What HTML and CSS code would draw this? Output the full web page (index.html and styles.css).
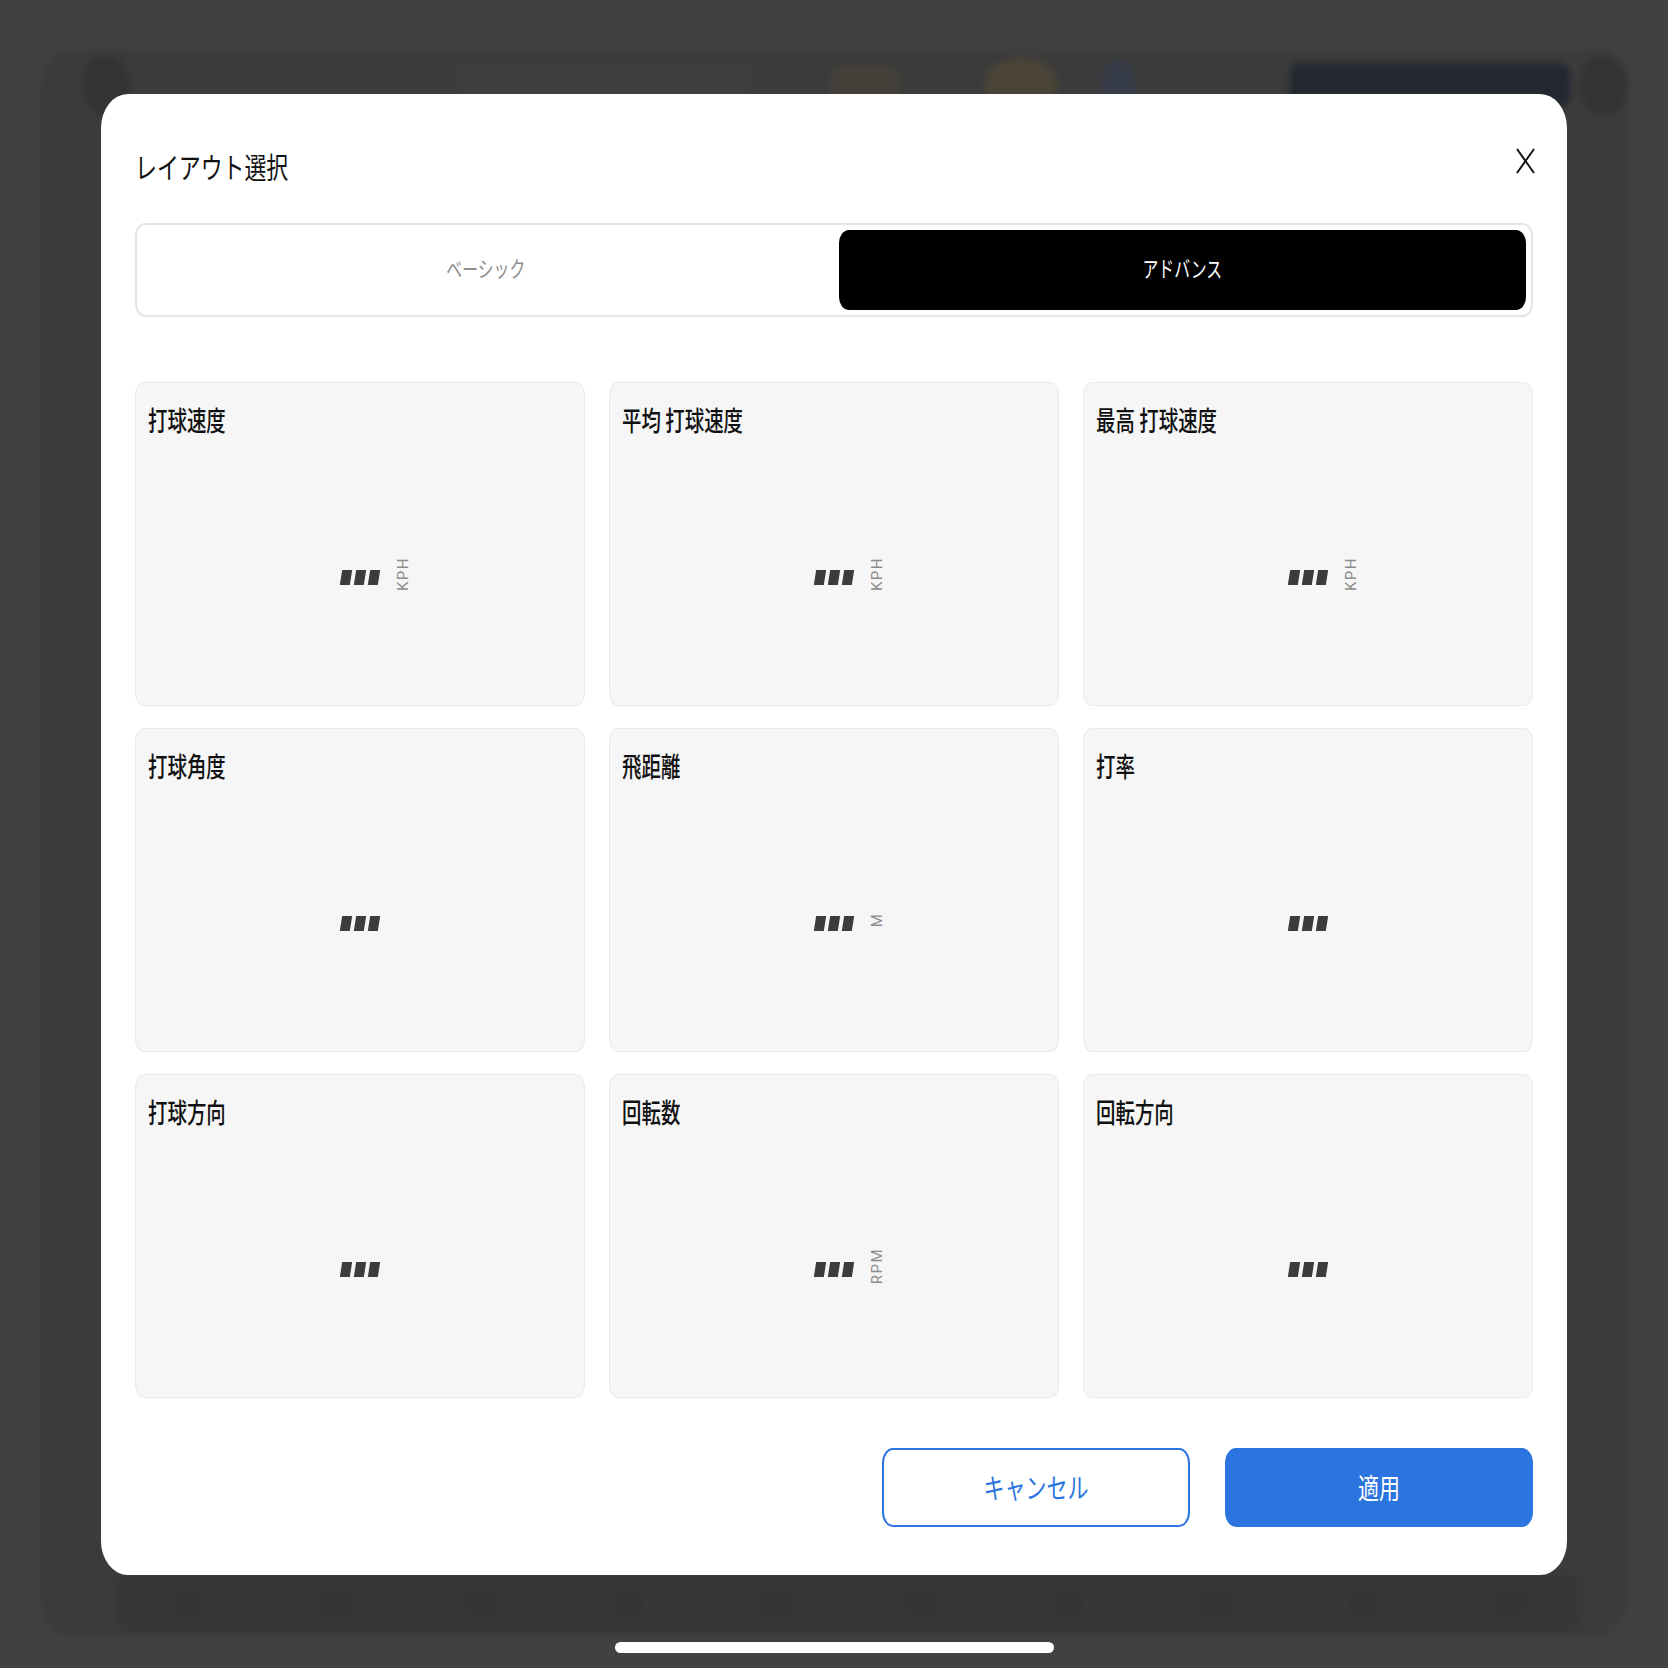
FILE: index.html
```html
<!DOCTYPE html>
<html lang="ja">
<head>
    <meta charset="UTF-8">
    <meta name="viewport" content="width=device-width, initial-scale=1.0">
    <title>レイアウト選択</title>
    <link rel="stylesheet" href="styles.css">
</head>
<body>
    <div class="app">
        <header class="app-head">
            <span class="blob avatar"></span>
            <span class="blob search"></span>
            <span class="spacer"></span>
            <span class="blob gold"></span>
            <span class="blob ochre"></span>
            <span class="blob sky"></span>
            <span class="blob navy"></span>
            <span class="blob avatar"></span>
        </header>
        <main class="app-main"></main>
        <nav class="app-tabs">
            <span class="blob dot"></span>
            <span class="blob dot"></span>
            <span class="blob dot"></span>
            <span class="blob dot"></span>
            <span class="blob dot"></span>
            <span class="blob dot"></span>
            <span class="blob dot"></span>
            <span class="blob dot"></span>
            <span class="blob dot"></span>
            <span class="blob dot"></span>
        </nav>
    </div>
    <div class="home-bar"></div>

    <div class="overlay">
        <section class="modal">
            <div class="modal-head">
                <h2 class="modal-title"><span class="cond">レイアウト選択</span></h2>
                <button class="close" aria-label="閉じる">
                    <svg width="19" height="26" viewBox="0 0 19 26">
                        <path d="M1 1 L18 25 M18 1 L1 25" stroke="#111" stroke-width="2" fill="none"/>
                    </svg>
                </button>
            </div>

            <div class="seg">
                <button class="seg-btn"><span class="cond mid">ベーシック</span></button>
                <button class="seg-btn active"><span class="cond mid">アドバンス</span></button>
            </div>

            <div class="grid">
                <div class="card">
                    <div class="card-title"><span class="cond">打球速度</span></div>
                    <div class="card-body"><div class="value"><i></i><i></i><i></i><span class="unit">KPH</span></div></div>
                </div>
                <div class="card">
                    <div class="card-title"><span class="cond">平均 打球速度</span></div>
                    <div class="card-body"><div class="value"><i></i><i></i><i></i><span class="unit">KPH</span></div></div>
                </div>
                <div class="card">
                    <div class="card-title"><span class="cond">最高 打球速度</span></div>
                    <div class="card-body"><div class="value"><i></i><i></i><i></i><span class="unit">KPH</span></div></div>
                </div>
                <div class="card">
                    <div class="card-title"><span class="cond">打球角度</span></div>
                    <div class="card-body"><div class="value"><i></i><i></i><i></i></div></div>
                </div>
                <div class="card">
                    <div class="card-title"><span class="cond">飛距離</span></div>
                    <div class="card-body"><div class="value"><i></i><i></i><i></i><span class="unit">M</span></div></div>
                </div>
                <div class="card">
                    <div class="card-title"><span class="cond">打率</span></div>
                    <div class="card-body"><div class="value"><i></i><i></i><i></i></div></div>
                </div>
                <div class="card">
                    <div class="card-title"><span class="cond">打球方向</span></div>
                    <div class="card-body"><div class="value"><i></i><i></i><i></i></div></div>
                </div>
                <div class="card">
                    <div class="card-title"><span class="cond">回転数</span></div>
                    <div class="card-body"><div class="value"><i></i><i></i><i></i><span class="unit">RPM</span></div></div>
                </div>
                <div class="card">
                    <div class="card-title"><span class="cond">回転方向</span></div>
                    <div class="card-body"><div class="value"><i></i><i></i><i></i></div></div>
                </div>
            </div>

            <div class="actions">
                <button class="btn btn-cancel"><span class="cond mid">キャンセル</span></button>
                <button class="btn btn-apply"><span class="cond mid">適用</span></button>
            </div>
        </section>
    </div>
</body>
</html>
```

FILE: styles.css
```css
html {
    font-family: "Noto Sans CJK JP", "Noto Sans", sans-serif;
}
body {
    margin: 0;
    height: 1668px;
    box-sizing: border-box;
    padding: 50px 40px 15px;
    background: #414141;
    display: flex;
    flex-direction: column;
    overflow: hidden;
}
button {
    font-family: inherit;
    cursor: pointer;
}

/* dimmed app behind the dialog */
.app {
    flex: 1;
    display: flex;
    flex-direction: column;
    background: #3b3b3b;
    border-radius: 30px / 40px;
    filter: blur(3px);
}
.app-head {
    display: flex;
    align-items: center;
    gap: 24px;
    height: 70px;
    padding: 0 0 0 42px;
}
.spacer {
    flex: 1;
}
.blob {
    display: block;
    background: #363636;
}
.avatar {
    width: 48px;
    height: 60px;
    border-radius: 50%;
    background: #333;
}
.search {
    width: 300px;
    height: 40px;
    border-radius: 10px;
    background: #3e3e3e;
    margin-left: 300px;
}
.gold {
    width: 70px;
    height: 40px;
    border-radius: 12px;
    background: #43403a;
}
.ochre {
    width: 74px;
    height: 56px;
    border-radius: 50%;
    background: #4a4337;
    margin-left: 60px;
}
.sky {
    width: 34px;
    height: 50px;
    border-radius: 50%;
    background: #363c48;
    margin-left: 20px;
}
.navy {
    width: 280px;
    height: 44px;
    border-radius: 10px;
    background: #232831;
    margin-left: 130px;
    margin-right: -14px;
}
.app-main {
    flex: 1;
}
.app-tabs {
    display: flex;
    justify-content: space-around;
    align-items: center;
    height: 58px;
    margin: 0 45px 4px 75px;
    background: #373737;
    border-radius: 16px;
}
.dot {
    width: 30px;
    height: 30px;
    border-radius: 8px;
    background: #343434;
}
.home-bar {
    width: 439px;
    height: 11px;
    margin: 6px auto 0;
    border-radius: 6px;
    background: #fff;
}

/* dialog */
.overlay {
    position: fixed;
    inset: 0;
    display: flex;
    align-items: center;
    justify-content: center;
}
.modal {
    width: 1466px;
    box-sizing: border-box;
    padding: 52px 34px 48px;
    background: #fff;
    border-radius: 27px / 34px;
}
.cond {
    display: inline-block;
    transform: scaleX(.72);
    transform-origin: 0 50%;
    white-space: nowrap;
}
.cond.mid {
    transform-origin: 50% 50%;
}
.modal-head {
    display: flex;
    justify-content: space-between;
    align-items: flex-start;
}
.modal-title {
    margin: 0;
    font-size: 29px;
    font-weight: 400;
    line-height: 40px;
    color: #111;
}
.modal-title .cond {
    transform: scaleX(.755);
}
.close {
    border: none;
    background: none;
    padding: 0;
    margin: 2px -2px 0 0;
    line-height: 0;
}

.seg {
    display: grid;
    grid-template-columns: 1fr 1fr;
    gap: 9px;
    margin-top: 37px;
    padding: 5px;
    border: 2px solid #e4e4e8;
    border-radius: 10px / 13px;
}
.seg-btn {
    height: 80px;
    padding: 0 0 5px;
    border: none;
    background: none;
    font-size: 22px;
    color: #8e8e8e;
    border-radius: 10px / 13px;
}
.seg-btn.active {
    background: #000;
    color: #fff;
}

.grid {
    display: grid;
    grid-template-columns: repeat(3, 1fr);
    grid-auto-rows: 324px;
    column-gap: 24px;
    row-gap: 22px;
    margin-top: 65px;
}
.card {
    display: flex;
    flex-direction: column;
    background: #f6f6f6;
    border: 1.5px solid #e9e9e9;
    border-radius: 9px / 13px;
}
.card-title {
    padding: 17px 12px 11px;
    font-size: 27px;
    font-weight: 500;
    line-height: 40px;
    color: #111;
}
.card-body {
    flex: 1;
    display: flex;
    align-items: center;
    justify-content: center;
}
.value {
    position: relative;
    display: flex;
    gap: 4px;
}
.value i {
    display: block;
    width: 10px;
    height: 15px;
    background: #3c3c3c;
    transform: skewX(-9deg);
}
.unit {
    position: absolute;
    left: calc(100% + 18px);
    top: 50%;
    writing-mode: vertical-rl;
    transform: translateY(calc(-50% - 4px)) rotate(180deg);
    font-family: Roboto, "Liberation Sans", sans-serif;
    font-size: 15px;
    line-height: 12px;
    letter-spacing: 1.5px;
    color: #8c8c8c;
}

.actions {
    display: flex;
    justify-content: flex-end;
    gap: 35px;
    margin-top: 50px;
}
.btn {
    width: 308px;
    height: 79px;
    font-size: 28px;
    border: 2px solid #2c74df;
    border-radius: 11px / 15px;
}
.btn .cond {
    transform: scaleX(.75);
}
.btn-cancel {
    background: #fff;
    color: #2c74df;
}
.btn-apply {
    background: #2c74df;
    color: #fff;
}
```
